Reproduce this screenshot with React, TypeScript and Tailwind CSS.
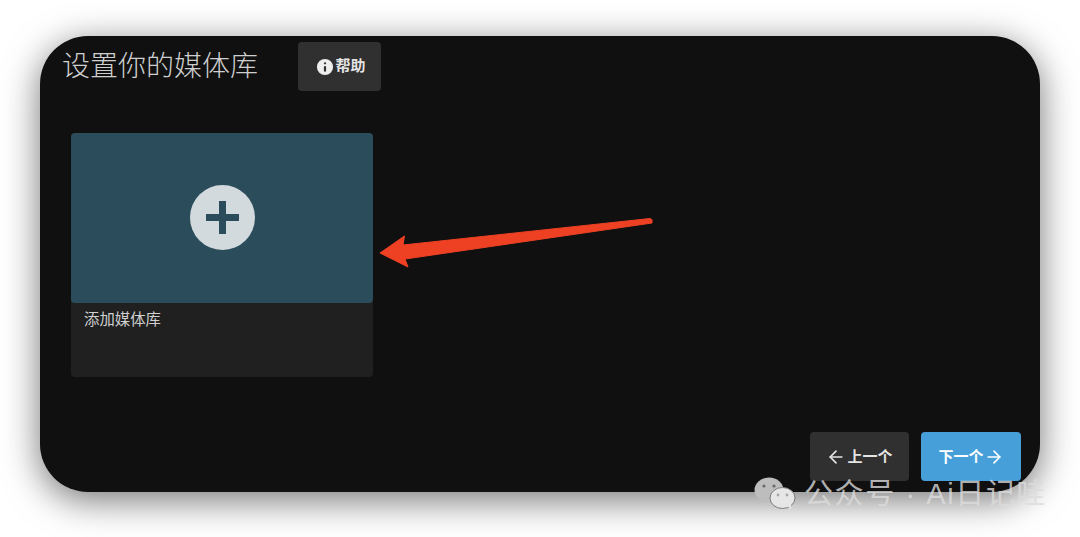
import { ArrowLeft, ArrowRight, Info } from 'lucide-react';

const CJK = "font-['Liberation_Sans','Noto_Sans_CJK_SC',sans-serif]";

function WechatMark() {
  return (
    <svg width="42" height="34" viewBox="0 0 42 34" className="shrink-0">
      <ellipse cx="15" cy="13" rx="14.5" ry="12.5" fill="#bdbdbd" />
      <path d="M5 21 L5 27 L12 23 Z" fill="#bdbdbd" />
      <ellipse cx="28.5" cy="21" rx="12.5" ry="10.5" fill="#e6e6e6" stroke="#7a7a7a" strokeWidth="1" />
      <path d="M34 29 L37 33 L37 27 Z" fill="#e6e6e6" />
      <circle cx="10" cy="9" r="1.6" fill="#6a6a6a" />
      <circle cx="20" cy="9" r="1.6" fill="#6a6a6a" />
      <circle cx="24" cy="18" r="1.4" fill="#a8a8a8" />
      <circle cx="33" cy="18" r="1.4" fill="#a8a8a8" />
    </svg>
  );
}

export default function App() {
  return (
    <div className={`relative h-[537px] w-[1080px] overflow-hidden bg-white ${CJK}`}>
      <div className="px-10 pt-9">
        <div className="h-[456px] rounded-[48px] bg-[#101010] pl-[23px] pr-[19px] shadow-[0_8px_36px_rgba(0,0,0,0.55)] flex flex-col">
          <div className="flex h-[55px] items-end pt-[6px]">
            <h1 className="-ml-px h-[49px] text-[28px] font-light leading-[50px] text-[#cfcfcf]">设置你的媒体库</h1>
            <button className="ml-10 flex h-[49px] w-[83px] items-center justify-center rounded bg-[#303030] text-[15px] font-bold text-[#e4e4e4]">
              <Info size={22} fill="#eeeeee" stroke="#303030" strokeWidth={2.4} />
              帮助
            </button>
          </div>

          <div className="ml-2 mt-[42px] flex h-[244px] w-[302px] flex-col overflow-hidden rounded bg-[#202020]">
            <div className="flex h-[170px] items-center justify-center rounded-b-sm bg-[#2b4c5b] pb-[2px]">
              <div className="relative flex h-[65px] w-[65px] items-center justify-center rounded-full bg-[#d3dadd]">
                <span className="absolute h-[33px] w-[7px] bg-[#2b4c5b]" />
                <span className="absolute h-[7px] w-[33px] bg-[#2b4c5b]" />
              </div>
            </div>
            <p className="pl-[13px] pt-[6px] text-[15.4px] leading-[22px] text-[#d0d0d0]">添加媒体库</p>
          </div>

          <div className="mt-[55px] flex justify-end gap-3">
            <button className="flex h-[49px] w-[99px] items-center justify-center gap-[1px] rounded bg-[#303030] text-[15px] font-bold text-[#e4e4e4]">
              <ArrowLeft size={20} strokeWidth={2} />
              <span className="pt-px">上一个</span>
            </button>
            <button className="flex h-[49px] w-[100px] items-center justify-center rounded bg-[#469fd8] text-[15px] font-bold text-white">
              <span className="pt-[2px]">下一个</span>
              <ArrowRight size={20} strokeWidth={2} />
            </button>
          </div>
        </div>
      </div>

      {/* red annotation arrow */}
      <svg className="absolute left-[375px] top-[210px]" width="285" height="62" viewBox="0 0 285 62">
        <path
          d="M5 43 L29.5 26 L28 35 L275 8.5 Q278 9 277 12 L277 13 L30 49 L33 57 Z"
          fill="#ee4124"
          stroke="#ee4124"
          strokeWidth="1"
          strokeLinejoin="round"
        />
      </svg>

      {/* watermark */}
      <div className="absolute left-[754px] top-[476px] flex items-center">
        <WechatMark />
        <span className="ml-[8px] whitespace-nowrap pt-px text-[29px] leading-[34px] tracking-[1.6px] text-[#dcdcdc]/80">
          公众号 · Ai日记哇
        </span>
      </div>
    </div>
  );
}
